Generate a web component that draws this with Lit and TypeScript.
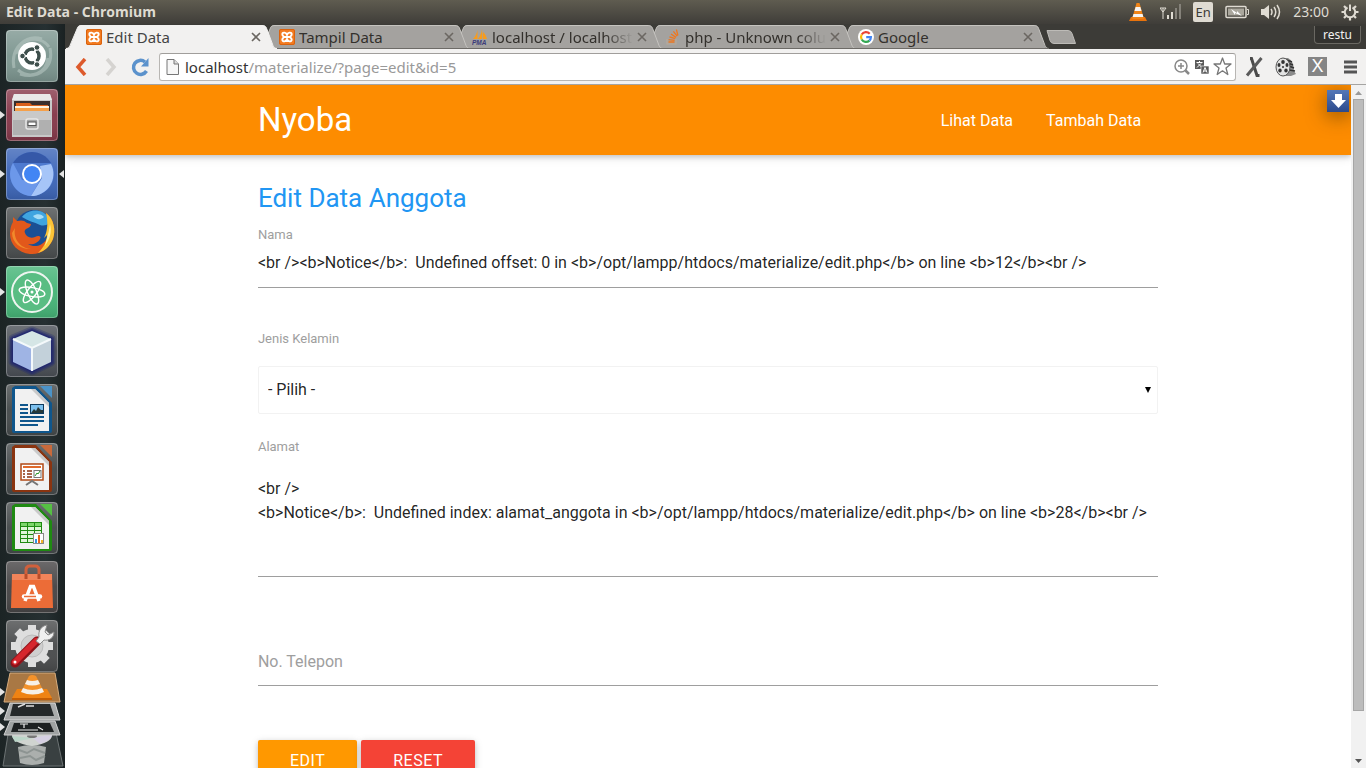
import { LitElement, html, svg, css, nothing, TemplateResult } from "lit";
import { customElement } from "lit/decorators.js";

/* ---------- small favicons ---------- */
const xampp = html`<svg class="fav" viewBox="0 0 16 16" aria-hidden="true">
  <rect width="16" height="16" rx="2" fill="#f37b20"/><rect x=".5" y=".5" width="15" height="15" rx="1.5" fill="none" stroke="#d9620e"/>
  <path d="M8 6C7.500 3.200 3.500 2.800 3.300 5c-.1 1.500.9 1.800 1.700 3-.8 1.200-1.800 1.500-1.700 3 .2 2.200 4.200 1.800 4.700-1 .5 2.800 4.500 3.200 4.700 1 .1-1.500-.9-1.800-1.700-3 .8-1.200 1.800-1.500 1.700-3C12.500 2.800 8.500 3.200 8 6zM5.500 8h5" fill="none" stroke="#fff" stroke-width="1.900" stroke-linejoin="round"/></svg>`;
const pma = html`<svg class="fav" viewBox="0 0 16 16" aria-hidden="true">
  <path d="M5.500 1C5 4 3.500 7.500 1 10h4.500zM10 0c.5 4 .6 7 0 10H5.800C8 7.500 9.500 4 10 0zM11 3c2 2 3.500 4.500 4 7h-4z" fill="#f89c1c"/>
  <text x="0" y="15.500" font-family="Liberation Sans" font-size="6.500" font-weight="700" font-style="italic" fill="#3b3b7a">PMA</text></svg>`;
const stack = html`<svg class="fav" viewBox="0 0 16 16" aria-hidden="true">
  <path d="M2 10v5h9v-5" fill="none" stroke="#b8a99a" stroke-width="1.200"/><path d="M3.500 13h6M3.600 10.600l6 .8M4.400 7.800l5.800 1.800M6 5l5 3.400M8.400 2.300l3.700 4.900M11.400.5l1.500 6" stroke="#f0771e" stroke-width="1.300"/></svg>`;
const google = html`<svg class="fav" viewBox="0 0 16 16" aria-hidden="true"><circle cx="8" cy="8" r="8" fill="#fff"/>
  <g fill="none" stroke-width="2.200"><path d="M11.700 4.700A5 5 0 0 0 3.700 5.500" stroke="#ea4335"/><path d="M3.700 5.500a5 5 0 0 0 0 5" stroke="#fbbc05"/><path d="M3.700 10.500a5 5 0 0 0 7.700 1.100" stroke="#34a853"/><path d="M11.400 11.600A4.900 4.900 0 0 0 12.900 8.200H8.200" stroke="#4285f4"/></g></svg>`;

interface Tab { title: string; icon: TemplateResult; }
const tabs: Tab[] = [
  { title: "Edit Data", icon: xampp },
  { title: "Tampil Data", icon: xampp },
  { title: "localhost / localhost", icon: pma },
  { title: "php - Unknown colum", icon: stack },
  { title: "Google", icon: google },
];

/* ---------- launcher drawings, each on a 52 x 52 tile ---------- */
const page = (dark: string, light: string) => svg`
  <path d="M9 2h21l16 17v28a2 2 0 0 1-2 2H8a2 2 0 0 1-2-2V4z" fill="${dark}"/>
  <path d="M9 5h20l14 14v28H9z" fill="#f1f1f1"/><path d="M29 5l14 14v4L25 5z" fill="#c9c9c9"/>
  <path d="M34 2h12v12z" fill="${light}"/>`;

const apps = [
  { name: "Dash", tile: "#7d9690", run: false, art: svg`
    <path d="M8 38C4 18 20 4 36 9M14 44C34 50 48 36 44 18M10 24C14 8 34 4 43 17M42 28C40 44 24 50 12 40" fill="none" stroke="#b5c6c1" stroke-width="3" opacity=".6"/>
    <circle cx="26" cy="26" r="14" fill="#fff"/><circle cx="26" cy="26" r="7" fill="none" stroke="#3e4f4c" stroke-width="3.500"/>
    <path d="M26 26L15 26M26 26l5.500-9.500M26 26l5.500 9.500" stroke="#fff" stroke-width="2"/><circle cx="26" cy="26" r="5" fill="#fff"/>
    <g fill="#3e4f4c" stroke="#fff"><circle cx="16.500" cy="26" r="2.800"/><circle cx="31" cy="17.500" r="2.800"/><circle cx="31" cy="34.500" r="2.800"/></g>` },
  { name: "Files", tile: "#86384a", run: true, art: svg`
    <path d="M8 5h36l2 6v37H6V11z" fill="#c8c8c8"/><path d="M8 5h36l2 6H6z" fill="#e9e9e9"/><path d="M8 12h36v12H8z" fill="#3a2f2d"/>
    <path d="M10 14h14l2 2h16v6H10z" fill="#d9601c"/><path d="M9 17h34v2H9z" fill="#fff3df"/><path d="M9 19h34v3H9z" fill="#f5a04a"/>
    <path d="M7 22h38v24H7z" fill="#b0b0b0"/><path d="M7 22h38v9H7z" fill="#c9c9c9"/>
    <rect x="20" y="30" width="12" height="10" rx="2" fill="#a5a5a5" stroke="#e8e8e8" stroke-width="1.500"/><rect x="22" y="33" width="8" height="3.500" fill="#fff" stroke="#555"/>` },
  { name: "Chromium", tile: "#3d66b8", run: true, focus: true, art: svg`
    <circle cx="26" cy="26" r="22" fill="#4e7ad0"/><path d="M7 15A22 22 0 0 1 45 15H26z" fill="#3558a8"/>
    <path d="M7 15A22 22 0 0 0 25 48L33 34 16 32z" fill="#6c98ea"/><path d="M45 16A22 22 0 0 1 25 48L36 30 34 18z" fill="#a6c5f8"/>
    <circle cx="26" cy="26" r="10" fill="#fff"/><circle cx="26" cy="26" r="8" fill="#4285f4"/>` },
  { name: "Firefox", tile: "#4b4f50", run: false, art: svg`
    <circle cx="28" cy="22" r="19" fill="#1a4f94"/><path d="M16 10C22 2 36 1 42 10c4 6-2 10-8 8-6-3-12-4-18-8z" fill="#3fa4e0"/><path d="M27 9c4-3 9-2 11 1-3 3-8 3-11-1z" fill="#a5dcf6"/>
    <path d="M40 6c8 6 10 17 7 26-4 10-13 16-23 15C12 46 4 37 4 27c0-5 1-9 3-12l0-5 4 4c4-1 7-1 10 2l4 1c0 2-2 4-5 5-1 1-2 2-1 4 1 3 5 6 10 4 3-2 7-1 5 2-2 4-7 6-12 5 6 4 14 2 18-4 4-7 4-14 2-21z" fill="#e2581b"/>
    <path d="M9 21c-2 11 5 20 16 21-8 1-19-5-19-16z" fill="#f18a2b"/>
    <path d="M40 6c8 6 10 17 7 26-3 7-8 12-15 14 6-6 9-12 9-18l-3 3c4-7 4-17 2-25z" fill="#fbc437"/><path d="M44 17c2 8 0 15-5 22 1-6 4-13 5-22z" fill="#fff0a0"/>` },
  { name: "Atom", tile: "#46b578", run: true, art: svg`
    <circle cx="26" cy="26" r="20" fill="#59bd83" stroke="#eef5f0" stroke-width="2"/>
    <g fill="none" stroke="#fff" stroke-width="1.400"><ellipse cx="26" cy="26" rx="13" ry="4.500" transform="rotate(10 26 26)"/><ellipse cx="26" cy="26" rx="13" ry="4.500" transform="rotate(66 26 26)"/><ellipse cx="26" cy="26" rx="13" ry="4.500" transform="rotate(128 26 26)"/></g><circle cx="26" cy="26" r="1.500" fill="#fff"/>` },
  { name: "NetBeans", tile: "#4b5057", run: false, art: svg`
    <g fill="none" stroke="#1c2470" stroke-linejoin="round"><path d="M26 6l19 8v23L26 46 7 37V14z" stroke-width="9" opacity=".3"/><path d="M26 6l19 8v23L26 46 7 37V14z" stroke-width="6" opacity=".45"/><path d="M26 6l19 8v23L26 46 7 37V14z" stroke-width="3" opacity=".7"/></g>
    <path d="M26 6l19 8-19 9L7 14z" fill="#d5e6e6"/><path d="M7 14l19 9v23L7 37z" fill="#9fb4e4"/><path d="M45 14l-19 9v23l19-9z" fill="#c3d1da"/><path d="M7 14l19 9 19-9M26 23v23" fill="none" stroke="#f4f9fb" stroke-width="2"/>` },
  { name: "LibreOffice Writer", tile: "#464b4c", run: false, art: svg`${page("#0f568c", "#4b93c8")}
    <path d="M14 21h8M14 25h8M14 29h8M14 33h24M14 37h24M14 41h18" stroke="#0f568c" stroke-width="2"/>
    <rect x="24.500" y="20.500" width="13" height="9" fill="#7cc0ee" stroke="#0f3a5c"/><path d="M25 29l3-4 2 2 2-4 3 3 2 0v3z" fill="#26383a"/>` },
  { name: "LibreOffice Impress", tile: "#464b4c", run: false, art: svg`${page("#8a3410", "#c96a3b")}
    <rect x="15" y="21" width="22" height="16" fill="#fff" stroke="#b14a16" stroke-width="1.500"/><path d="M17 24h18" stroke="#e06a2c" stroke-width="2"/>
    <path d="M17 28h2M17 31h2M17 34h2M21 28h5M21 31h5M21 34h5" stroke="#8a3410" stroke-width="1.600"/><rect x="28" y="27.500" width="7" height="7" fill="#fff" stroke="#777"/><path d="M29 33l2-3 1 1 2-3" fill="none" stroke="#2a9a2a"/>
    <path d="M20 42l6-4 6 4" fill="none" stroke="#777" stroke-width="2"/>` },
  { name: "LibreOffice Calc", tile: "#464b4c", run: false, art: svg`${page("#1f8a12", "#55c043")}
    <rect x="14.500" y="20.500" width="21" height="20" fill="#dff5d8" stroke="#1f8a12"/><path d="M15 22.500h20" stroke="#7ed66c" stroke-width="3"/>
    <path d="M14 24.500h22M14 28.500h22M14 32.500h22M14 36.500h22M21.500 20v20M28.500 20v20" stroke="#1f8a12" fill="none"/>
    <rect x="27.500" y="31.500" width="10" height="10" fill="#fff" stroke="#888"/><path d="M29 37h2v4h-2z" fill="#3295e0"/><path d="M32 33h2v8h-2z" fill="#e8641b"/><path d="M35 38h2v3h-2z" fill="#f5b42a"/>` },
  { name: "Ubuntu Software", tile: "#474546", run: false, art: svg`
    <path d="M20 18V9q0-4 4-4h5q4 0 4 4v9" fill="none" stroke="#d0603c" stroke-width="3"/><path d="M6 13h40l1 34H5z" fill="#ec6c37"/><path d="M6 13h40v6H6z" fill="#f2845a"/><path d="M20 13v5M33 13v5" stroke="#b94d2a" stroke-width="3"/>
    <path d="M19 40l5.500-14.500h3L33 40" fill="none" stroke="#fff" stroke-width="3.500"/><path d="M18 35.500h16" stroke="#fff" stroke-width="4.500" stroke-linecap="round"/><path d="M18 35.500h12" stroke="#ec6c37" stroke-width="1.400"/>` },
  { name: "System Settings", tile: "#4a4c4d", run: false, art: svg`
    <g fill="#dedede"><circle cx="26" cy="26" r="17"/><path d="M22 5h8v42h-8z"/><path d="M22 5h8v42h-8z" transform="rotate(45 26 26)"/><path d="M22 5h8v42h-8z" transform="rotate(90 26 26)"/><path d="M22 5h8v42h-8z" transform="rotate(135 26 26)"/></g><circle cx="26" cy="26" r="11" fill="#cfcfcf" stroke="#bbb"/>
    <path d="M9 43L31 21" stroke="#8d1218" stroke-width="9" stroke-linecap="round"/><path d="M9 42L30 21" stroke="#d6262d" stroke-width="6" stroke-linecap="round"/>
    <path d="M30 21l3-4c-1-6 2-11 8-12l-2 7 3 3 6-3c0 6-5 9-10 8l-4 4z" fill="#f0f0f0" stroke="#8b8b8b"/><circle cx="9" cy="42" r="1.500" fill="#fff"/>` },
];

const cone = svg`<path d="M3 15h14l2 4H1z" fill="#e9730c"/><path d="M8.500 1h3L16 17H4z" fill="#f08519"/><path d="M7.600 5h4.800l1.100 4h-7z" fill="#f4f4f4"/><path d="M5.500 12h9l.9 3H4.600z" fill="#f4f4f4"/>`;

@customElement("desktop-panel")
class DesktopPanel extends LitElement {
  static styles = css`
    :host { display: flex; align-items: center; justify-content: space-between; height: 24px; padding: 0 7px 0 6px;
      background: linear-gradient(#5f5c50, #3f3d39); color: #dfdbd2; font: 13px/24px "Noto Sans", sans-serif; box-sizing: border-box; }
    .title { font: 700 14px/24px "Open Sans", sans-serif; }
    .tray { display: flex; align-items: center; gap: 12px; }
    svg { display: block; }
    .lang { background: #dfdbd2; color: #3c3b37; border-radius: 2px; width: 20px; height: 20px; line-height: 20px; text-align: center; font-size: 13px; }
    .time { font-size: 14px; }
  `;
  render() {
    return html`<span class="title">Edit Data - Chromium</span>
      <div class="tray">
        <svg width="20" height="22" viewBox="0 0 20 20">${cone}</svg>
        <svg width="21" height="16" viewBox="0 0 21 16"><path d="M0 4h6L3 8zM3 4v11" stroke="#dfdbd2" fill="none"/><path d="M7 11h2v4H7zM11 8h2v7h-2z" fill="#dfdbd2"/><path d="M15 4h2v11h-2zM19 0h2v15h-2z" fill="#85827a"/></svg>
        <span class="lang">En</span>
        <svg width="24" height="14" viewBox="0 0 24 14"><rect x="1" y="1.500" width="20" height="11" rx="1" fill="none" stroke="#dfdbd2" stroke-width="1.500"/><path d="M3 3.500h16v7H3z" fill="#aaa79d"/><path d="M22 4.500h1.500v5H22" stroke="#dfdbd2" fill="none"/><path d="M6 4l6 4 0-2 5 5-7-3v2z" fill="#fff"/></svg>
        <svg width="20" height="16" viewBox="0 0 20 16"><path d="M0 5h3l5-4v14l-5-4H0z" fill="#dfdbd2"/><path d="M10 5q2 3 0 6M13 3q3.500 5 0 10M16 1q5 7 0 14" fill="none" stroke="#dfdbd2" stroke-width="1.500"/></svg>
        <span class="time">23:00</span>
        <svg width="18" height="18" viewBox="0 0 18 18"><g stroke="#dfdbd2" fill="none"><path d="M6.500 4.500a5.200 5.200 0 1 0 5 0" stroke-width="2"/><path d="M9 1.500V8" stroke-width="2"/><path d="M3 3l2 2M15 3l-2 2M.5 9H4M14 9h3.500M3 15l2-2M15 15l-2-2M9 14v3.500" stroke-width="2.200"/></g></svg>
      </div>`;
  }
}

@customElement("app-launcher")
class AppLauncher extends LitElement {
  static styles = css`
    :host { display: flex; flex-direction: column; gap: 7px; padding: 6px 0 0; width: 65px; flex: none; box-sizing: border-box;
      background: linear-gradient(90deg, #1c2425, #263032 70%, #1a2122); overflow: hidden; }
    .item { display: flex; align-items: center; }
    .mark { width: 6px; display: flex; }
    button { width: 52px; height: 52px; padding: 0; border: 0; border-radius: 4px; overflow: hidden; background: none; }
    svg { display: block; flex: none; }
    .pile { margin-top: -7px; }
  `;
  render() {
    return html`${apps.map(a => html`<div class="item">
        <span class="mark">${a.run ? html`<svg width="5" height="8"><path d="M0 0l5 4-5 4z" fill="#e4e4e4"/></svg>` : nothing}</span>
        <button aria-label=${a.name}><svg width="52" height="52" viewBox="0 0 52 52">
          <defs><linearGradient id="sheen" x2="0" y2="1"><stop stop-color="#fff" stop-opacity=".2"/><stop offset=".5" stop-color="#fff" stop-opacity=".03"/><stop offset="1" stop-color="#000" stop-opacity=".12"/></linearGradient></defs>
          <rect width="52" height="52" fill=${a.tile}/><rect width="52" height="52" fill="url(#sheen)"/>${a.art}
          <rect x=".5" y=".5" width="51" height="51" rx="4" fill="none" stroke="#fff" stroke-opacity=".28"/></svg></button>
        <span class="mark">${a.focus ? html`<svg width="6" height="8"><path d="M6 0L1 4l5 4z" fill="#e4e4e4"/></svg>` : nothing}</span>
      </div>`)}
      <svg class="pile" width="65" height="98" viewBox="0 0 65 98">
        <path d="M9 56h46l8 38H3z" fill="#394041" stroke="#6d7374"/><path d="M18 75q14-4 28 0l-2 16q-12 4-24 0z" fill="#bfc3c1" opacity=".85"/><path d="M19 78l8 3 7-4 11 4M20 86l10-2 6 4 9-4" stroke="#8d9492" stroke-width="2" fill="none"/>
        <path d="M12 63q20-10 40 0 0 8-20 11-20-3-20-11z" fill="#d0d4d0"/><path d="M33 66l19-4q0 6-12 10z" fill="#d5cfe2"/><path d="M33 66l-18 4-3-6z" fill="#bcd6c9"/><ellipse cx="32" cy="64" rx="5" ry="2" fill="#777"/>
        <path d="M10 49h45l5 14H4z" fill="#9fa2a2" stroke="#d0d0d0"/><path d="M14 51h36l4 9H11z" fill="#1d2021"/><path d="M20 52h8M24 52v4M18 58h20M38 55l5 3" stroke="#eee" stroke-width="1.200" fill="none"/>
        <path d="M10 31h45l5 17H4z" fill="#a9abab" stroke="#d8d8d8"/><path d="M13 32h37l4 12H10z" fill="#25292a"/><path d="M18 35l7-3M26 34h8" stroke="#ddd" stroke-width="1.500"/>
        <path d="M10 1h45l5 29H4z" fill="#a97844" stroke="#d6ac7e"/><path d="M17 17h30l5 9H12z" fill="#ef8314"/><path d="M12 26h40v2H12z" fill="#c55e05"/><path d="M29 4q3-2 7 0l8 16q-11 5-23 0z" fill="#f3922b"/><path d="M27 8q5 2 11 0l2 4q-8 3-15 0zM23 16q9 4 19 0l2 4q-11 5-23 0z" fill="#f6f0e8"/>
        <g fill="#e4e4e4"><path d="M0 16l5 4-5 4zM0 35l5 4-5 4zM0 51l5 4-5 4z"/></g>
      </svg>`;
  }
}

@customElement("tab-strip")
class TabStrip extends LitElement {
  static styles = css`
    :host { display: flex; height: 25px; padding: 0 5px 0 1px; background: #3c3b37; font: 15px/22px "Noto Sans", sans-serif; color: #33302c; }
    .tab { display: flex; flex: 0 1 211px; min-width: 0; margin-right: -18px; position: relative; height: 25px; }
    .cap { width: 16px; flex: none; display: block; fill: #a4a29f; }
    .edge { fill: none; stroke: #c5c3bf; }
    .low { fill: none; stroke: #6d6b67; }
    .mid { flex: 1; min-width: 0; display: flex; align-items: center; gap: 4px; background: #a4a29f; margin-top: 1px; padding: 0 0 0 4px;
      border-top: 1px solid #c5c3bf; border-bottom: 1px solid #6d6b67; box-sizing: border-box; }
    .on .cap { fill: #f2f1f0; }
    .on .mid { background: #f2f1f0; border-color: #f2f1f0; color: #444; }
    .on .edge, .on .low { stroke: #f2f1f0; }
    .fav { width: 16px; height: 16px; flex: none; }
    .name { flex: 1; min-width: 0; overflow: hidden; white-space: nowrap; }
    .long { -webkit-mask-image: linear-gradient(90deg, #000 80%, transparent); mask-image: linear-gradient(90deg, #000 80%, transparent); }
    .close { width: 10px; height: 10px; padding: 0; border: 0; background: none; flex: none; }
    .close svg { display: block; }
    .new { width: 30px; height: 14px; margin: 6px 0 0 15px; padding: 0; border: 0; background: none; }
    .new svg { display: block; }
    .user { margin: 2px 0 0 auto; height: 18px; width: 47px; padding: 0; border: 1px solid #6a6862; border-top: 0; border-radius: 0 0 4px 4px; background: #33322f; color: #f2f1f0; font: 12px/18px "Noto Sans", sans-serif; }
  `;
  render() {
    return html`${tabs.map((t, i) => html`<div class="tab ${i === 0 ? "on" : ""}" style="z-index:${tabs.length - i}">
        <svg class="cap" width="16" height="25" viewBox="0 0 16 25"><path d="M0 25c2 0 3-1 4-3l7-17c1-3 2-4 5-4v24z"/><path class="edge" d="M0 24.500c2 0 3-1 4-3l7-16.500c1-3 2-3.500 5-3.500"/><path class="low" d="M0 24.500h16"/></svg>
        <div class="mid">${t.icon}<span class="name ${t.title.length > 18 ? "long" : ""}">${t.title}</span>
          <button class="close" aria-label="Close tab"><svg width="10" height="10"><path d="M1 1l8 8M9 1L1 9" stroke="#6b6762" stroke-width="1.600"/></svg></button></div>
        <svg class="cap" width="16" height="25" viewBox="0 0 16 25"><path d="M16 25c-2 0-3-1-4-3L6 5C5 2 4 1 0 1v24z"/><path class="edge" d="M0 1.500c4 0 5 1 6 4l6 16c1 2 2 3 4 3"/><path class="low" d="M0 24.500h16"/></svg>
      </div>`)}
      <button class="new" aria-label="New tab"><svg width="30" height="14"><path d="M1 .5h21q3 0 4 3l3.500 10H8q-3 0-4-3z" fill="#a4a29f" stroke="#bdbbb7"/></svg></button>
      <button class="user">restu</button>`;
  }
}

@customElement("browser-toolbar")
class BrowserToolbar extends LitElement {
  static styles = css`
    :host { display: flex; align-items: center; height: 36px; box-sizing: border-box; padding: 0 9px 0 6px; background: #f2f1f0; border-bottom: 1px solid #a5a4a2; }
    button { border: 0; background: none; padding: 0; display: flex; align-items: center; justify-content: center; flex: none; }
    svg { display: block; flex: none; }
    .nav { display: flex; gap: 10px; align-items: center; }
    .nav button { width: 20px; height: 22px; }
    .box { flex: 1; min-width: 0; display: flex; align-items: center; gap: 3px; height: 28px; box-sizing: border-box; margin: 0 9px 0 8px; padding: 0 3px 0 6px; border: 1px solid #b8b6b3; border-top-color: #a09e9b; border-radius: 3px; background: #fff; }
    .url { flex: 1; min-width: 0; font: 15px/24px "Noto Sans", sans-serif; margin-left: 3px; color: #999; white-space: nowrap; }
    .host { color: #333; }
    .tools { display: flex; gap: 12px; align-items: center; }
    .square { width: 19px; height: 19px; background: #858585; color: #fff; font: 18px/19px "Liberation Sans", sans-serif; }
    .menu { margin-left: 5px; }
  `;
  render() {
    return html`<div class="nav">
        <button aria-label="Back"><svg width="12" height="18" viewBox="0 0 12 18"><path d="M10 1L3 9l7 8" fill="none" stroke="#dd5a2c" stroke-width="3.500"/></svg></button>
        <button aria-label="Forward"><svg width="12" height="18" viewBox="0 0 12 18"><path d="M2 1l7 8-7 8" fill="none" stroke="#d5d3d0" stroke-width="3.500"/></svg></button>
        <button aria-label="Reload"><svg width="20" height="20" viewBox="0 0 20 20"><path d="M15.500 14A7 7 0 1 1 14 5" fill="none" stroke="#5b92cc" stroke-width="3.500"/><path d="M17.500 1v8.500H10z" fill="#5b92cc"/></svg></button>
      </div>
      <div class="box">
        <svg width="13" height="16" viewBox="0 0 13 16"><path d="M1 .5h7L12.500 5v10.500H1z" fill="#f7f7f7" stroke="#777"/><path d="M8 .5V5h4.500" fill="#ddd" stroke="#777"/></svg>
        <div class="url"><span class="host">localhost</span>/materialize/?page=edit&amp;id=5</div>
        <button aria-label="Zoom"><svg width="18" height="18" viewBox="0 0 18 18"><circle cx="8" cy="8" r="6" fill="none" stroke="#888" stroke-width="1.500"/><path d="M12.500 12.500L16 16" stroke="#888" stroke-width="2.500"/><path d="M5 8h6M8 5v6" stroke="#888" stroke-width="1.500"/></svg></button>
        <button aria-label="Translate"><svg width="16" height="16" viewBox="0 0 16 16"><rect x="1" y="1" width="9" height="9" fill="#5b5b5b"/><path d="M2.500 3.500h6M5.500 2v1.500M3 8.500l4-4M8 8.500l-4-4" stroke="#fff" fill="none"/><rect x="7" y="7" width="8" height="8" fill="#5b5b5b" stroke="#fff" stroke-width=".6"/><path d="M9 13.500l2-5 2 5M9.500 12h3" stroke="#fff" fill="none"/></svg></button>
        <button aria-label="Bookmark"><svg width="19" height="19" viewBox="0 0 19 19"><path d="M9.500 1l2.200 6h6.300l-5 4 1.800 6.500-5.300-3.700-5.300 3.700L6 11 1 7h6.300z" fill="#fff" stroke="#777" stroke-width="1.300" stroke-linejoin="round"/></svg></button>
      </div>
      <div class="tools">
        <button aria-label="Cross tool"><svg width="18" height="20" viewBox="0 0 18 20"><path d="M5 1.500h1.500L12 18.500h2.500" fill="none" stroke="#4a4a4a" stroke-width="3"/><path d="M16.500 1L2 18.500" stroke="#5a5a5a" stroke-width="3"/></svg></button>
        <button aria-label="Video"><svg width="21" height="20" viewBox="0 0 21 20"><path d="M8 1h5q6 3 6 13l2 3-5 2H9z" fill="#8c8c8c"/><path d="M12 3l5 2M13 6l5 2M14 9l5 2M14 13l6 1" stroke="#333" stroke-width="1.500"/><ellipse cx="8" cy="10" rx="7" ry="9" fill="#e3e3e3" stroke="#555"/><g fill="#333"><ellipse cx="8" cy="5" rx="1.800" ry="2"/><ellipse cx="4" cy="8" rx="1.500" ry="2"/><ellipse cx="12" cy="8" rx="1.500" ry="2"/><ellipse cx="5" cy="13.500" rx="1.700" ry="2"/><ellipse cx="11" cy="13.500" rx="1.700" ry="2"/><circle cx="8" cy="10" r="1"/></g></svg></button>
        <button class="square" aria-label="X extension">X</button>
        <button class="menu" aria-label="Menu"><svg width="13" height="14"><path d="M0 2h13M0 7h13M0 12h13" stroke="#555" stroke-width="3"/></svg></button>
      </div>`;
  }
}

@customElement("member-form")
class MemberForm extends LitElement {
  static styles = css`
    :host { display: block; width: 70%; margin: 0 auto; padding-top: 28px; font: 16px/24px Roboto, sans-serif; color: rgba(0, 0, 0, 0.87); }
    h1 { margin: 0 0 14px; font-size: 26px; line-height: 30px; font-weight: 400; color: #2196f3; }
    label { display: block; font-size: 13px; line-height: 16px; color: #9e9e9e; }
    input, textarea, select { display: block; width: 100%; box-sizing: border-box; margin: 0; border: 0; border-radius: 0; outline: 0; background: none; font: inherit; color: inherit; }
    input { height: 45px; padding: 0 0 5px; border-bottom: 1px solid #9e9e9e; }
    .gender { margin-top: 43px; }
    .pick { display: grid; align-items: center; margin: 19px 0 25px; }
    .pick > * { grid-area: 1 / 1; }
    select { appearance: none; height: 48px; padding: 0 9px; border: 1px solid #f2f2f2; border-radius: 2px; }
    .arrow { justify-self: end; margin-right: 7px; pointer-events: none; }
    textarea { height: 122px; padding: 22px 0 0; resize: none; overflow: hidden; border-bottom: 1px solid #9e9e9e; }
    .phone { display: grid; margin: 64px 0 54px; }
    .phone > * { grid-area: 1 / 1; }
    .phone label { font-size: 16px; line-height: 42px; }
    .actions { display: flex; gap: 4px; }
    button { height: 42px; padding: 0 32px; border: 0; border-radius: 2px; font: 16px/42px Roboto, sans-serif; letter-spacing: 0.5px; color: #fff; background: #ff9800; box-shadow: 0 2px 5px rgba(0, 0, 0, 0.16), 0 2px 10px rgba(0, 0, 0, 0.12); }
    .reset { background: #f44336; }
  `;
  render() {
    return html`<form @submit=${(e: Event) => e.preventDefault()}>
      <h1>Edit Data Anggota</h1>
      <label for="nama">Nama</label>
      <input id="nama" type="text" .value=${"<br /><b>Notice</b>:  Undefined offset: 0 in <b>/opt/lampp/htdocs/materialize/edit.php</b> on line <b>12</b><br />"}>
      <label class="gender" for="jk">Jenis Kelamin</label>
      <div class="pick"><select id="jk"><option>- Pilih -</option><option>Laki-laki</option><option>Perempuan</option></select>
        <svg class="arrow" width="6" height="6" aria-hidden="true"><path d="M0 0h6L3 6z"/></svg></div>
      <label for="alamat">Alamat</label>
      <textarea id="alamat" .value=${"<br />\n<b>Notice</b>:  Undefined index: alamat_anggota in <b>/opt/lampp/htdocs/materialize/edit.php</b> on line <b>28</b><br />"}></textarea>
      <div class="phone"><label for="telp">No. Telepon</label><input id="telp" type="tel"></div>
      <div class="actions"><button type="submit">EDIT</button><button class="reset" type="reset">RESET</button></div>
    </form>`;
  }
}

@customElement("app-root")
class AppRoot extends LitElement {
  static styles = css`
    :host { display: flex; flex-direction: column; height: 100vh; overflow: hidden; background: #fff; }
    .desk { flex: 1; min-height: 0; display: flex; }
    .window { flex: 1; min-width: 0; display: flex; flex-direction: column; }
    .view { flex: 1; min-height: 0; display: flex; }
    .site { flex: 1; min-width: 0; overflow: hidden; position: relative; background: #fff; }
    .bar { background: #fd8c00; box-shadow: 0 2px 5px rgba(0, 0, 0, 0.16), 0 2px 10px rgba(0, 0, 0, 0.12); }
    .inner { width: 70%; margin: 0 auto; height: 70px; display: flex; align-items: center; justify-content: space-between; font: 16px/70px Roboto, sans-serif; }
    a { color: #fff; text-decoration: none; }
    .logo { font-size: 33px; }
    nav { display: flex; gap: 33px; padding: 2px 17px 0 0; }
    .grab { position: absolute; top: 5px; right: 2px; width: 22px; height: 22px; padding: 0; border: 0; background: linear-gradient(#5478b8, #2c4a8c); box-shadow: 0 4px 20px rgba(60, 40, 0, 0.6); }
    .grab svg { display: block; }
    .scroll { width: 15px; flex: none; display: flex; flex-direction: column; align-items: center; justify-content: space-between; background: #f1f1f1; box-sizing: border-box; padding: 6px 0 5px; }
    .thumb { width: 11px; height: 91%; margin: 4px 0 auto; background: #bcbcbc; border: 1px solid #a6a6a6; box-sizing: border-box; }
    .scroll svg { display: block; flex: none; }
  `;
  render() {
    return html`<desktop-panel></desktop-panel>
      <div class="desk"><app-launcher></app-launcher>
        <div class="window"><tab-strip></tab-strip><browser-toolbar></browser-toolbar>
          <div class="view">
            <div class="site">
              <header class="bar"><div class="inner"><a class="logo" href="#">Nyoba</a><nav><a href="#">Lihat Data</a><a href="#">Tambah Data</a></nav></div></header>
              <member-form></member-form>
              <button class="grab" aria-label="Download"><svg width="22" height="22"><path d="M8 4h7v6h4l-7.500 8L4 10h4z" fill="#fff"/></svg></button>
            </div>
            <div class="scroll"><svg width="7" height="4"><path d="M0 4l3.500-4L7 4z" fill="#999"/></svg><div class="thumb"></div><svg width="7" height="4"><path d="M0 0h7L3.500 4z" fill="#555"/></svg></div>
          </div>
        </div>
      </div>`;
  }
}
